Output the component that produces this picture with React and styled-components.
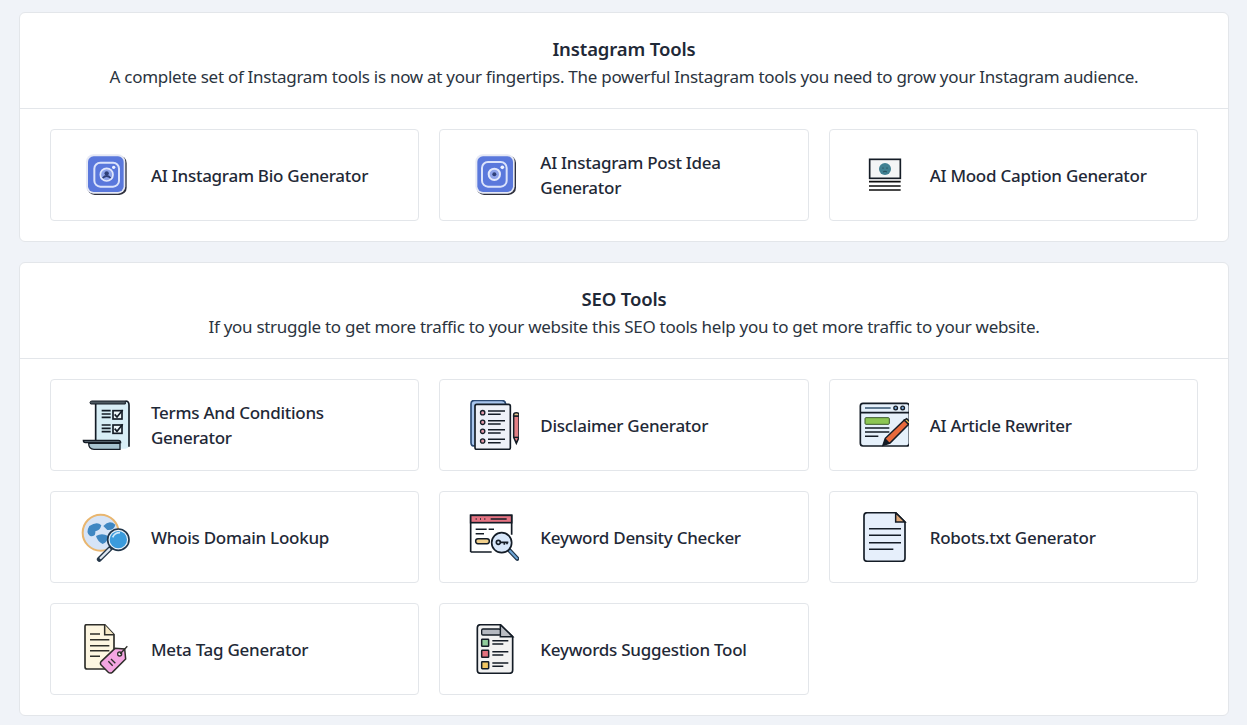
import React from 'react';
import styled, { createGlobalStyle } from 'styled-components';

const GlobalStyle = createGlobalStyle`
  html, body {
    margin: 0;
    padding: 0;
    background: #f0f3f8;
    font-family: "Noto Sans", "Open Sans", Arial, sans-serif;
    color: #1f2937;
  }
`;

const Page = styled.div`
  display: flex;
  flex-direction: column;
  gap: 20px;
  padding: 12px 18px 9px 19px;
  height: 725px;
  box-sizing: border-box;
  overflow: hidden;
`;
const Section = styled.section`
  background: #fff;
  border: 1px solid #e3e6ea;
  border-radius: 6px;
`;
const SectionHeader = styled.header`
  height: 96px;
  box-sizing: border-box;
  padding-top: 23px;
  border-bottom: 1px solid #e3e6ea;
  text-align: center;
`;
const SectionTitle = styled.h2`
  margin: 0;
  font-size: 18.5px;
  line-height: 26px;
  font-weight: 600;
  letter-spacing: -0.13px;
  color: #1f2937;
`;
const SectionText = styled.p`
  margin: 2px 0 0;
  font-size: 17px;
  line-height: 26px;
  font-weight: 400;
  letter-spacing: -0.28px;
  color: #2b3440;
`;
const ToolGrid = styled.div`
  display: grid;
  grid-template-columns: repeat(3, 1fr);
  gap: 20px;
  padding: 20px 30px;
`;
const ToolCard = styled.a`
  display: flex;
  align-items: center;
  gap: 21px;
  height: 92px;
  box-sizing: border-box;
  padding: 0 29px;
  background: #fff;
  border: 1px solid #e3e6ea;
  border-radius: 4px;
`;
const ToolIcon = styled.svg`
  flex: none;
  width: 50px;
  height: 50px;
`;
const ToolName = styled.span`
  font-size: 17px;
  line-height: 25px;
  font-weight: 500;
  letter-spacing: -0.27px;
  color: #1f2937;
`;

const ink = '#141c26';

const Bio = () => (
  <ToolIcon viewBox="30 30 150 150">
    <rect x="52" y="47" width="118" height="118" rx="22" fill="#2e303c" />
    <rect x="48" y="43" width="118" height="118" rx="22" fill="#e6e9f5" />
    <rect x="54" y="49" width="107" height="107" rx="17" fill="#5a78dc" />
    <rect x="73" y="68" width="74" height="72" rx="18" fill="none" stroke="#dbe3fb" strokeWidth="6" />
    <circle cx="110" cy="104" r="19" fill="#8ea3ea" stroke="#e2e8fc" strokeWidth="5" />
    <circle cx="110" cy="100" r="6.5" fill="#2f3f78" />
    <path d="M98 114q12-12 24 0" fill="none" stroke="#2f3f78" strokeWidth="5" />
    <circle cx="131" cy="82" r="5" fill="#eef2ff" />
  </ToolIcon>
);

const Post = () => (
  <ToolIcon viewBox="27 30 150 150">
    <rect x="50" y="47" width="118" height="118" rx="22" fill="#2e303c" />
    <rect x="46" y="43" width="118" height="118" rx="22" fill="#e6e9f5" />
    <rect x="52" y="49" width="107" height="107" rx="17" fill="#5a78dc" />
    <rect x="66" y="66" width="74" height="74" rx="18" fill="none" stroke="#dbe3fb" strokeWidth="6" />
    <circle cx="103" cy="103" r="17" fill="#8ea3ea" stroke="#e2e8fc" strokeWidth="6" />
    <circle cx="103" cy="103" r="6" fill="#2f3f78" />
    <circle cx="127" cy="82" r="5.5" fill="#eef2ff" />
  </ToolIcon>
);

const Mood = () => (
  <ToolIcon viewBox="27 30 150 150">
    <rect x="59" y="58" width="92" height="57" fill="#f3f5f6" stroke={ink} strokeWidth="5" />
    <circle cx="105" cy="87" r="18" fill="#3f8092" />
    <circle cx="99" cy="84" r="1.8" fill="#17333b" />
    <circle cx="111" cy="84" r="1.8" fill="#17333b" />
    <path d="M99 96q6-5 12 0" fill="none" stroke="#17333b" strokeWidth="2" />
    <path d="M57 125H152M57 138H152M57 150H152" stroke="#0c0c0c" strokeWidth="5" />
  </ToolIcon>
);

const Terms = () => (
  <ToolIcon viewBox="30 30 150 150">
    <path d="M76 34H166Q177 34 177 45V166Q177 176 166 176H76Z" fill="#d8eef6" />
    <path d="M77 37V150M166 33Q177 33 177 45V170" fill="none" stroke={ink} strokeWidth="5" />
    <path d="M60 38Q60 33 66 33H166V42H62Z" fill="#4d5961" stroke={ink} strokeWidth="3" />
    <path d="M56 160H150V178H72Q56 178 56 160Z" fill="#a7c3d0" stroke={ink} strokeWidth="4" />
    <path d="M40 151H145Q152 151 152 158H46Q40 158 40 151Z" fill="#53616b" stroke={ink} strokeWidth="4" />
    <path d="M95 62H122M95 72H122M95 82H122M95 105H122M95 115H122M95 125H122" stroke={ink} strokeWidth="5" />
    <rect x="129" y="62" width="27" height="25" fill="#eef8fb" stroke={ink} strokeWidth="5" />
    <rect x="129" y="105" width="27" height="25" fill="#eef8fb" stroke={ink} strokeWidth="5" />
    <path d="M134 73L141 81L158 60M134 116L141 124L158 103" fill="none" stroke={ink} strokeWidth="5" />
  </ToolIcon>
);

const Disclaimer = () => (
  <ToolIcon viewBox="27 30 150 150">
    <path d="M44 168Q33 168 33 158V42Q33 31 44 31H124Q136 31 137 42" fill="#a8c6ee" stroke="#2c4a74" strokeWidth="5" />
    <rect x="45" y="43" width="106" height="135" rx="5" fill="#eef1f8" stroke={ink} strokeWidth="5" />
    {[68, 97, 124, 153].map(y => (
      <g key={y}>
        <circle cx="68" cy={y} r="6.5" fill="#e39aa8" stroke={ink} strokeWidth="4" />
        <path d={`M84 ${y - 5}H135M84 ${y + 5}H122`} stroke={ink} strokeWidth="4.5" />
      </g>
    ))}
    <path d="M161 78V142L169 160L177 142V78Z" fill="#e27f84" stroke={ink} strokeWidth="4.5" />
    <path d="M161 78V74Q161 68 169 68Q177 68 177 74V78Z" fill="#e5c48d" stroke={ink} strokeWidth="4.5" />
    <path d="M162 142H176" stroke={ink} strokeWidth="4" />
    <path d="M165 152L169 160L173 152Z" fill={ink} />
  </ToolIcon>
);

const Rewriter = () => (
  <ToolIcon viewBox="27 30 150 150">
    <rect x="31" y="40" width="147" height="128" rx="8" fill="#e6f1fb" stroke={ink} strokeWidth="5" />
    <path d="M31 68H178" stroke={ink} strokeWidth="5" />
    <path d="M45 54H122" stroke="#35536f" strokeWidth="4.5" />
    <circle cx="137" cy="54" r="5.5" fill="#7aa7d6" stroke={ink} strokeWidth="4" />
    <circle cx="158" cy="54" r="5.5" fill="#7aa7d6" stroke={ink} strokeWidth="4" />
    <rect x="45" y="83" width="73" height="20" rx="3" fill="#8cc653" stroke="#3a5a2a" strokeWidth="3" />
    <path d="M45 114H118M45 126H118M45 139H85" stroke={ink} strokeWidth="4.5" />
    <path d="M99 166L106 145L163 90L176 103L120 159Z" fill="#e86a3c" stroke={ink} strokeWidth="4.5" />
    <path d="M163 90L170 86L180 96L176 103Z" fill="#efc75e" stroke={ink} strokeWidth="4" />
    <path d="M99 166L106 145L120 159Z" fill={ink} />
  </ToolIcon>
);

const Whois = () => (
  <ToolIcon viewBox="30 30 150 150">
    <circle cx="92" cy="92" r="54" fill="#d6e4f7" stroke="#e9b66f" strokeWidth="6" />
    <path d="M58 72Q82 56 94 70Q90 86 76 88Q78 106 60 102Q46 92 58 72Z" fill="#3f87c2" />
    <path d="M100 72Q118 52 136 68Q132 86 112 84Z" fill="#3f87c2" />
    <path d="M78 102Q96 92 114 102Q114 120 98 126Q82 118 78 102Z" fill="#3f87c2" />
    <path d="M122 138L88 172" stroke="#26384a" strokeWidth="15" strokeLinecap="round" />
    <path d="M118 142L92 168" stroke="#dfe8f2" strokeWidth="7" strokeLinecap="round" />
    <circle cx="145" cy="113" r="32" fill="#e9f3fb" stroke="#22364a" strokeWidth="5" />
    <circle cx="145" cy="113" r="26" fill="#3b9bdc" />
    <path d="M128 106Q134 92 150 92" fill="none" stroke="#cfe8fa" strokeWidth="5" />
  </ToolIcon>
);

const Density = () => (
  <ToolIcon viewBox="27 30 150 150">
    <path d="M32 150V40H155V98M32 150H95" fill="#fff" stroke={ink} strokeWidth="5" />
    <rect x="32" y="40" width="123" height="22" fill="#e57382" stroke={ink} strokeWidth="5" />
    <path d="M47 51H50M60 51H63M73 51H76M92 51H140" stroke={ink} strokeWidth="4.5" />
    <path d="M47 82H80M47 95H72M86 82H102" stroke={ink} strokeWidth="4.5" />
    <rect x="47" y="110" width="41" height="15" rx="7" fill="#f2d08c" stroke={ink} strokeWidth="4.5" />
    <path d="M148 145L172 170" stroke="#22364a" strokeWidth="13" strokeLinecap="round" />
    <path d="M150 147L171 169" stroke="#6fa7d8" strokeWidth="6" strokeLinecap="round" />
    <circle cx="125" cy="122" r="30" fill="#d8e7fa" stroke={ink} strokeWidth="5" />
    <circle cx="115" cy="121" r="6" fill="none" stroke={ink} strokeWidth="5" />
    <path d="M121 121H145M133 121V128M141 121V127" fill="none" stroke={ink} strokeWidth="5" />
  </ToolIcon>
);

const Robots = () => (
  <ToolIcon viewBox="27 30 150 150">
    <path d="M52 32H137L165 60V168Q165 178 155 178H52Q42 178 42 168V42Q42 32 52 32Z" fill="#e6effb" stroke={ink} strokeWidth="5" />
    <path d="M137 32V60H165Z" fill="#e2aa78" stroke={ink} strokeWidth="4.5" />
    <path d="M57 80H153M57 100H153M57 122H153M57 142H130" stroke={ink} strokeWidth="4.5" />
  </ToolIcon>
);

const Meta = () => (
  <ToolIcon viewBox="30 30 150 150">
    <path d="M50 32H104L132 62V165H52Q45 165 45 158V37Q45 32 50 32Z" fill="#fdf6e1" stroke="#2e2e2a" strokeWidth="5" />
    <path d="M104 32V62H132" fill="#f6e9c6" stroke="#2e2e2a" strokeWidth="4.5" />
    <path d="M60 60H90M60 77H118M60 95H118M60 110H118M60 127H90" stroke="#2e2e2a" strokeWidth="4.5" />
    <path d="M93 143L135 103L164 105L167 135L127 175Q120 180 114 174L94 154Q89 149 93 143Z" fill="#f4a6e2" stroke="#2e2e2a" strokeWidth="4.5" />
    <circle cx="149" cy="120" r="6" fill="#fff" stroke="#2e2e2a" strokeWidth="4" />
    <path d="M150 120L172 97" stroke="#2e2e2a" strokeWidth="4" />
    <path d="M115 142L128 155M123 135L136 148" stroke="#2e2e2a" strokeWidth="4" />
  </ToolIcon>
);

const Suggestion = () => (
  <ToolIcon viewBox="27 30 150 150">
    <path d="M62 32H121L158 68V168Q158 178 148 178H62Q52 178 52 168V42Q52 32 62 32Z" fill="#f2f2f2" stroke={ink} strokeWidth="5" />
    <path d="M121 32V68H158Z" fill="#b9bcc2" stroke={ink} strokeWidth="4.5" />
    <rect x="65" y="45" width="56" height="18" rx="4" fill="#b4b8c0" stroke={ink} strokeWidth="4" />
    <rect x="65" y="76" width="21" height="21" rx="2" fill="#8fcb9b" stroke={ink} strokeWidth="4.5" />
    <rect x="65" y="109" width="21" height="21" rx="2" fill="#e2717e" stroke={ink} strokeWidth="4.5" />
    <rect x="65" y="143" width="21" height="21" rx="2" fill="#f2c662" stroke={ink} strokeWidth="4.5" />
    <path d="M97 80H145M97 90H130M97 113H145M97 123H130M97 147H145M97 157H130" stroke={ink} strokeWidth="4.5" />
  </ToolIcon>
);

const sections = [
  {
    title: 'Instagram Tools',
    text: 'A complete set of Instagram tools is now at your fingertips. The powerful Instagram tools you need to grow your Instagram audience.',
    tools: [
      { name: 'AI Instagram Bio Generator', Icon: Bio },
      { name: 'AI Instagram Post Idea Generator', Icon: Post },
      { name: 'AI Mood Caption Generator', Icon: Mood },
    ],
  },
  {
    title: 'SEO Tools',
    text: 'If you struggle to get more traffic to your website this SEO tools help you to get more traffic to your website.',
    tools: [
      { name: 'Terms And Conditions Generator', Icon: Terms },
      { name: 'Disclaimer Generator', Icon: Disclaimer },
      { name: 'AI Article Rewriter', Icon: Rewriter },
      { name: 'Whois Domain Lookup', Icon: Whois },
      { name: 'Keyword Density Checker', Icon: Density },
      { name: 'Robots.txt Generator', Icon: Robots },
      { name: 'Meta Tag Generator', Icon: Meta },
      { name: 'Keywords Suggestion Tool', Icon: Suggestion },
    ],
  },
];

function App() {
  return (
    <Page>
      <GlobalStyle />
      {sections.map(section => (
        <Section key={section.title}>
          <SectionHeader>
            <SectionTitle>{section.title}</SectionTitle>
            <SectionText>{section.text}</SectionText>
          </SectionHeader>
          <ToolGrid>
            {section.tools.map(({ name, Icon }) => (
              <ToolCard key={name}>
                <Icon />
                <ToolName>{name}</ToolName>
              </ToolCard>
            ))}
          </ToolGrid>
        </Section>
      ))}
    </Page>
  );
}

export default App;
